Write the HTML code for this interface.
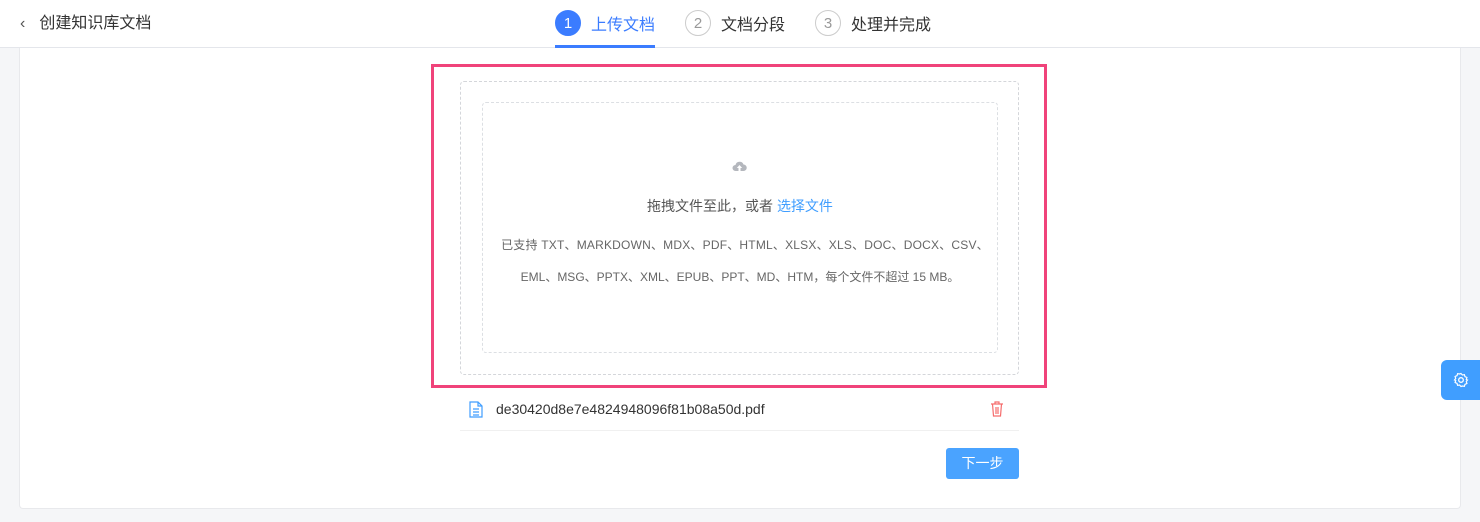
<!DOCTYPE html>
<html><head><meta charset="utf-8"><style>
*{margin:0;padding:0;box-sizing:border-box}
body{width:1480px;height:522px;background:#f5f6f8;font-family:"Liberation Sans","Noto Sans CJK SC",sans-serif;position:relative;overflow:hidden;color:#333}
.hdr{position:absolute;left:0;top:0;width:1480px;height:48px;background:#fff;border-bottom:1px solid #e4e6eb}
.back{position:absolute;left:20px;top:13px;font-size:16px;color:#333;line-height:22px}
.step{position:absolute;top:10px;height:26px;display:flex;align-items:center;font-size:16px;color:#333}
.c{width:26px;height:26px;border-radius:50%;border:1px solid #ccc;color:#999;display:flex;align-items:center;justify-content:center;font-size:15px;margin-right:10px}
.act .c{background:#3b7cff;border-color:#3b7cff;color:#fff}
.act{color:#3b7cff}
.ul{position:absolute;left:555px;top:45px;width:100px;height:3px;background:#3b7cff}
.card{position:absolute;left:19px;top:48px;width:1442px;height:461px;background:#fff;border:1px solid #e8e9ec;border-top:none;border-radius:0 0 4px 4px}
.pink{position:absolute;left:431px;top:64px;width:616px;height:324px;border:3px solid #f0437a}
.o{position:absolute;left:460px;top:81px;width:559px;height:294px;border:1px dashed #d4d6da;border-radius:4px}
.i{position:absolute;left:482px;top:102px;width:516px;height:251px;border:1px dashed #dcdfe3;border-radius:4px}
.t1{position:absolute;left:0;width:1480px;text-align:center;top:196px;font-size:14px;color:#555}
.t1 span{color:#409eff}
.t2{position:absolute;left:0;width:1480px;text-align:center;font-size:12px;color:#666}
.file{position:absolute;left:460px;top:391px;width:559px;height:40px;border-bottom:1px solid #f0f0f0;font-size:14px;color:#333}
.btn{position:absolute;left:946px;top:448px;width:73px;height:31px;background:#4aa3ff;border-radius:3px;color:#fff;font-size:14px;text-align:center;line-height:31px}
.gear{position:absolute;left:1441px;top:360px;width:39px;height:40px;background:#409eff;border-radius:6px 0 0 6px}
</style></head><body>
<div class="hdr">
<div class="back"><span style="color:#555;margin-right:14px">&#x2039;</span>创建知识库文档</div>
<div class="step act" style="left:555px"><div class="c">1</div>上传文档</div>
<div class="step" style="left:685px"><div class="c">2</div>文档分段</div>
<div class="step" style="left:815px"><div class="c">3</div>处理并完成</div>
<div class="ul"></div>
</div>
<div class="card"></div>
<div class="pink"></div>
<div class="o"></div>
<div class="i"></div>
<svg style="position:absolute;left:732px;top:160px" width="15" height="13" viewBox="0 0 15 13"><path d="M3.5 11A3 3 0 0 1 3.5 5 4.2 4.2 0 0 1 11.5 4.5 3.2 3.2 0 0 1 11.5 11z" fill="#b4b7bd"/><path d="M7.5 5L4.8 8h1.7v3h2V8h1.7z" fill="#fff"/></svg>
<div class="t1">拖拽文件至此，或者 <span>选择文件</span></div>
<div class="t2" style="top:236px;letter-spacing:0.2px;padding-left:10px">已支持 TXT、MARKDOWN、MDX、PDF、HTML、XLSX、XLS、DOC、DOCX、CSV、</div>
<div class="t2" style="top:268px;padding-left:0px">EML、MSG、PPTX、XML、EPUB、PPT、MD、HTM，每个文件不超过 15 MB。</div>
<div class="file">
<svg style="position:absolute;left:9px;top:10px" width="14" height="17" viewBox="0 0 14 17"><path d="M1 1h8l4 4v11H1z M9 1v4h4 M4 8h6M4 11h6M4 14h6" fill="none" stroke="#409eff" stroke-width="1.2"/></svg>
<span style="position:absolute;left:36px;top:10px">de30420d8e7e4824948096f81b08a50d.pdf</span>
<svg style="position:absolute;left:530px;top:10px" width="14" height="16" viewBox="0 0 14 16"><path d="M1 3h12M5 3V1h4v2M2.5 3l1 12h7l1-12M6 6v7M8 6v7" fill="none" stroke="#f56c6c" stroke-width="1.2"/></svg>
</div>
<div class="btn">下一步</div>
<div class="gear"><svg style="position:absolute;left:12px;top:12px" width="16" height="16" viewBox="0 0 16 16"><circle cx="8" cy="8" r="2.3" fill="none" stroke="#fff" stroke-width="1.3"/><path d="M8 1.5l1.4 1.5 2-.3.6 2 1.9.8-.6 2L14.5 8l-1.2 1.5.6 2-1.9.8-.6 2-2-.3L8 14.5l-1.4-1.5-2 .3-.6-2-1.9-.8.6-2L1.5 8l1.2-1.5-.6-2 1.9-.8.6-2 2 .3z" fill="none" stroke="#fff" stroke-width="1.2"/></svg></div>
</body></html>
